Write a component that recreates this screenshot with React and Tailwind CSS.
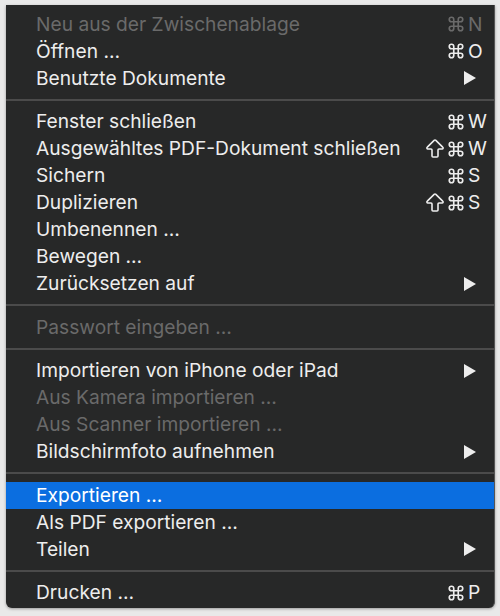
import { Command, ArrowBigUp } from 'lucide-react'

const items = [
  { label: 'Neu aus der Zwischenablage', key: 'N', disabled: true },
  { label: 'Öffnen …', key: 'O' },
  { label: 'Benutzte Dokumente', submenu: true },
  'sep',
  { label: 'Fenster schließen', key: 'W' },
  { label: 'Ausgewähltes PDF-Dokument schließen', shift: true, key: 'W' },
  { label: 'Sichern', key: 'S' },
  { label: 'Duplizieren', shift: true, key: 'S' },
  { label: 'Umbenennen …' },
  { label: 'Bewegen …' },
  { label: 'Zurücksetzen auf', submenu: true },
  'sep',
  { label: 'Passwort eingeben …', disabled: true },
  'sep',
  { label: 'Importieren von iPhone oder iPad', submenu: true },
  { label: 'Aus Kamera importieren …', disabled: true },
  { label: 'Aus Scanner importieren …', disabled: true },
  { label: 'Bildschirmfoto aufnehmen', submenu: true },
  'sep',
  { label: 'Exportieren …', active: true },
  { label: 'Als PDF exportieren …' },
  { label: 'Teilen', submenu: true },
  'sep',
  { label: 'Drucken …', key: 'P' },
]

const Arrow = () => (
  <svg width="12" height="14" viewBox="0 0 12 14" className="mr-[9px]">
    <polygon points="0,0 12,7 0,14" fill="currentColor" />
  </svg>
)

const Row = ({ item }) => {
  const color = item.disabled ? 'text-[#6a6a6a]' : 'text-[#ededed]'
  return (
    <div className={`flex items-center h-[27px] pl-[30px] pr-[9px] ${color} ${item.active ? 'bg-[#0b6ee0] text-white' : ''}`}>
      <span className="flex-1 whitespace-nowrap">{item.label}</span>
      {item.key && (
        <span className="flex items-center">
          {item.shift && <ArrowBigUp size={24} strokeWidth={1.6} />}
          <Command size={18} strokeWidth={2.2} />
          <span className="w-[17px] ml-[3px] text-left">{item.key}</span>
        </span>
      )}
      {item.submenu && <Arrow />}
    </div>
  )
}

export default function App() {
  return (
    <div className="min-h-[616px] w-[500px] bg-[#e9e9e9] pt-[5px] pl-[6px] font-['Inter',sans-serif] text-[19.2px]">
      <div className="w-[489px] bg-[#272828] rounded-b-[6px] pt-[5.5px] pb-[2px] border-r border-[#555] shadow-[0_1px_3px_rgba(0,0,0,0.35)] overflow-hidden">
        {items.map((item, i) =>
          item === 'sep' ? (
            <div key={i} className="h-[16.5px] flex items-center">
              <div className="h-[2px] w-full bg-[#4b4b4b]" />
            </div>
          ) : (
            <Row key={i} item={item} />
          )
        )}
      </div>
    </div>
  )
}
